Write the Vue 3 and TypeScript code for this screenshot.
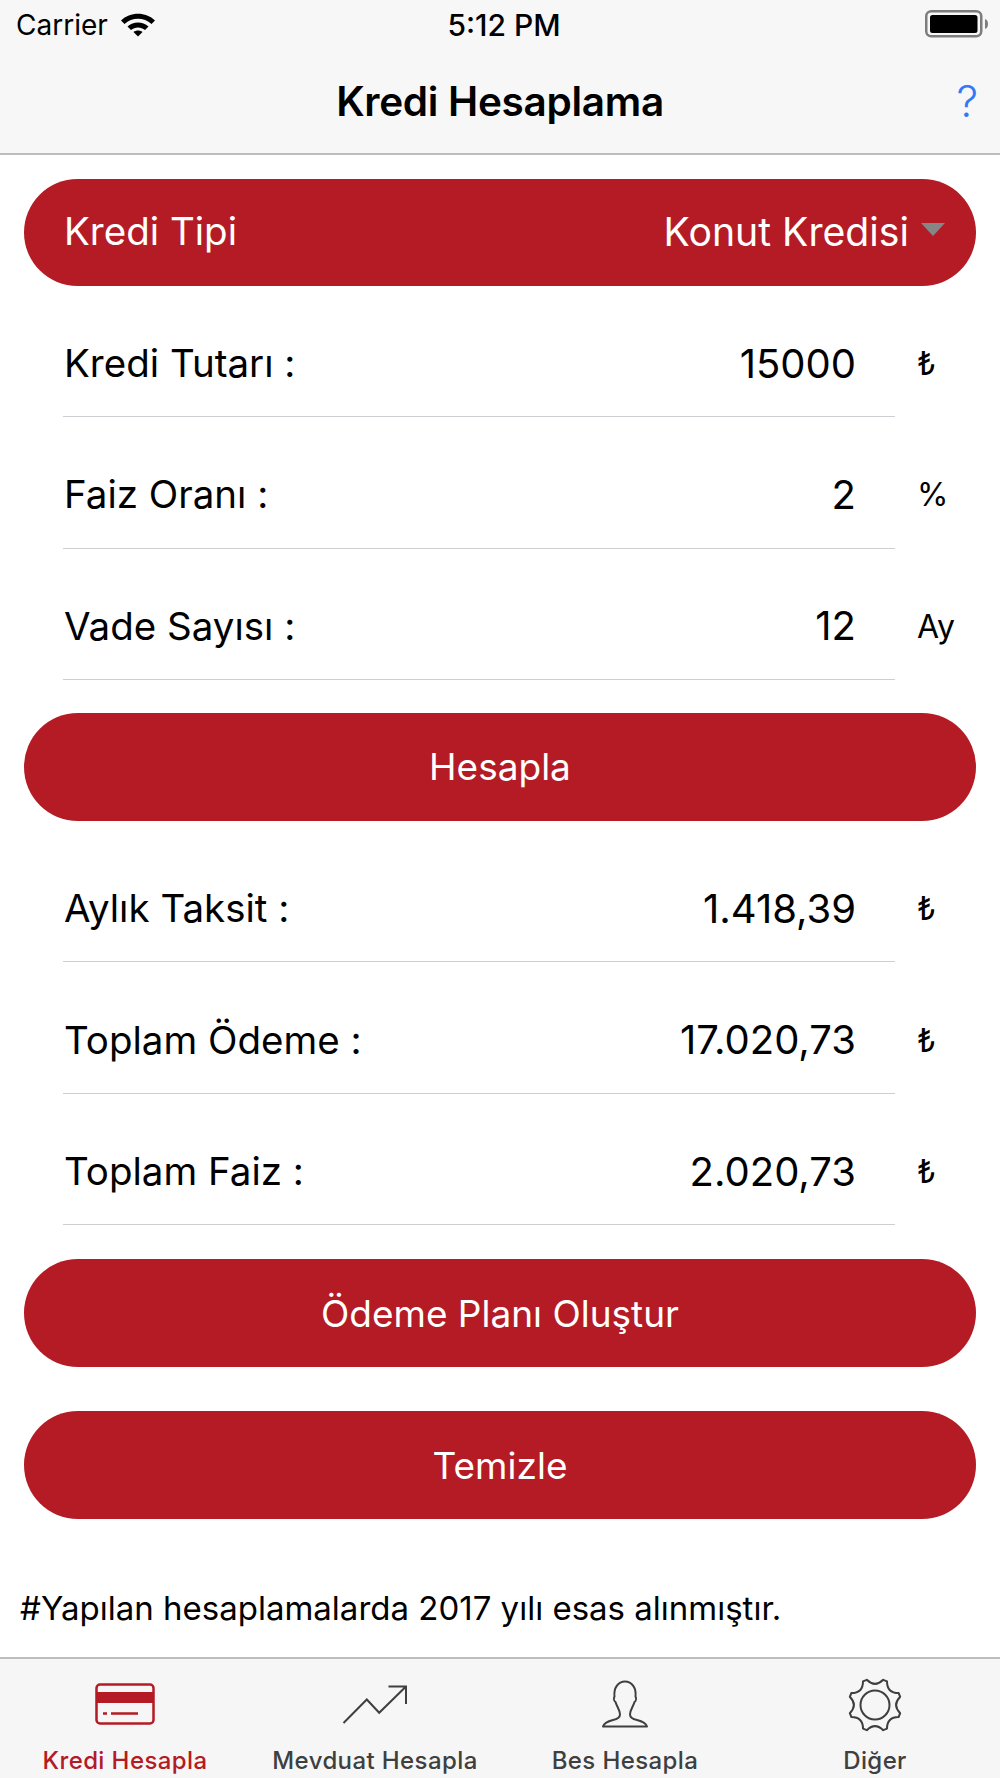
<template>
  <div class="screen">
    <header class="top">
      <div class="status">
        <div class="status-left">
          <span>Carrier</span>
          <svg class="wifi" width="36" height="26" viewBox="0 0 36 26">
            <path d="M1 9.5 C10 0.5 26 0.5 35 9.5 L31.5 13 C24 6 12 6 4.5 13 Z" fill="#000" />
            <path d="M7.5 15.5 C13.5 10 22.5 10 28.5 15.5 L25 19 C21 15.5 15 15.5 11 19 Z" fill="#000" />
            <path d="M13.5 21 C16 19 20 19 22.5 21 L18 25.5 Z" fill="#000" />
          </svg>
        </div>
        <span class="clock">5:12 PM</span>
        <svg class="battery" width="64" height="30" viewBox="0 0 64 30">
          <rect x="1.25" y="1.25" width="55" height="25" rx="5" fill="none" stroke="#7d7d7d" stroke-width="2.5" />
          <rect x="5" y="5" width="47.5" height="18" rx="2.5" fill="#000" />
          <path d="M60 9 C62 9.5 63 11.5 63 14 C63 16.5 62 18.5 60 19 Z" fill="#7d7d7d" />
        </svg>
      </div>
      <div class="nav">
        <span class="nav-title">Kredi Hesaplama</span>
        <span class="nav-help">?</span>
      </div>
    </header>

    <main class="content">
      <div class="pill pill-select">
        <span>Kredi Tipi</span>
        <span class="select-value">Konut Kredisi<i class="caret" /></span>
      </div>

      <div class="rows">
        <div class="row" v-for="r in inputs" :key="r.label">
          <div class="row-main">
            <span>{{ r.label }}</span>
            <span class="value">{{ r.value }}</span>
          </div>
          <span class="unit">{{ r.unit }}</span>
        </div>
      </div>

      <div class="pill">Hesapla</div>

      <div class="rows rows-result">
        <div class="row" v-for="r in results" :key="r.label">
          <div class="row-main">
            <span>{{ r.label }}</span>
            <span class="value">{{ r.value }}</span>
          </div>
          <span class="unit">{{ r.unit }}</span>
        </div>
      </div>

      <div class="pill">Ödeme Planı Oluştur</div>
      <div class="pill pill-last">Temizle</div>

      <p class="note">#Yapılan hesaplamalarda 2017 yılı esas alınmıştır.</p>
    </main>

    <nav class="tabs">
      <div class="tab active">
        <svg class="ic-card" width="60" height="42" viewBox="0 0 60 42">
          <rect x="1.5" y="1.5" width="57" height="39" rx="3.5" fill="none" stroke="#b41b25" stroke-width="2.5" />
          <rect x="1.5" y="9" width="57" height="11" fill="#b41b25" />
          <path d="M8 30.5 H12 M16 30.5 H43" stroke="#b41b25" stroke-width="2.5" />
        </svg>
        <span>Kredi Hesapla</span>
      </div>
      <div class="tab">
        <svg class="ic-trend" width="66" height="42" viewBox="0 0 66 42">
          <path d="M1.5 39 L24.8 15.5 L37.2 28.8 L64 2.5 M46.5 2.5 H64 V20" fill="none" stroke="#3f3f3f" stroke-width="2" />
        </svg>
        <span>Mevduat Hesapla</span>
      </div>
      <div class="tab">
        <svg class="ic-user" width="48" height="48" viewBox="0 0 48 48">
          <path d="M2 46.5 H46 C45 43 42 41.5 36 40 C31.5 39 29 37.5 29 34.5 C29 30 32 27 33.5 22 C35 21 35.5 18.5 34.5 16.5 C35.5 8 31 1.5 24 1.5 C17 1.5 12.5 8 13.5 16.5 C12.5 18.5 13 21 14.5 22 C16 27 19 30 19 34.5 C19 37.5 16.5 39 12 40 C6 41.5 3 43 2 46.5 Z" fill="none" stroke="#3f3f3f" stroke-width="2" stroke-linejoin="round" />
        </svg>
        <span>Bes Hesapla</span>
      </div>
      <div class="tab">
        <svg class="ic-gear" width="56" height="56" viewBox="0 0 56 56">
          <circle cx="28" cy="28" r="14.5" fill="none" stroke="#3f3f3f" stroke-width="2" />
          <path :d="gearPath" fill="none" stroke="#3f3f3f" stroke-width="2" stroke-linejoin="round" />
        </svg>
        <span>Diğer</span>
      </div>
    </nav>
  </div>
</template>

<script setup lang="ts">
interface Row {
  label: string
  value: string
  unit: string
}

const inputs: Row[] = [
  { label: 'Kredi Tutarı :', value: '15000', unit: '₺' },
  { label: 'Faiz Oranı :', value: '2', unit: '%' },
  { label: 'Vade Sayısı :', value: '12', unit: 'Ay' },
]

const results: Row[] = [
  { label: 'Aylık Taksit :', value: '1.418,39', unit: '₺' },
  { label: 'Toplam Ödeme :', value: '17.020,73', unit: '₺' },
  { label: 'Toplam Faiz :', value: '2.020,73', unit: '₺' },
]

// eight teeth, scalloped between them, none on the vertical axis
function buildGear(): string {
  const teeth = 8
  const step = (2 * Math.PI) / teeth
  const pt = (r: number, t: number) =>
    `${(28 + r * Math.cos(t)).toFixed(1)} ${(28 + r * Math.sin(t)).toFixed(1)}`
  let d = ''
  for (let i = 0; i < teeth; i++) {
    const a = i * step - Math.PI / 2 + step / 2
    d += `${i === 0 ? 'M' : 'L'}${pt(26.5, a - step * 0.1)} L${pt(26.5, a + step * 0.1)} Q${pt(17, a + step * 0.5)} ${pt(26.5, a + step * 0.9)} `
  }
  return d + 'Z'
}

const gearPath = buildGear()
</script>

<style>
html,
body {
  margin: 0;
  background: #fff;
}
</style>

<style scoped>
.screen {
  width: 1000px;
  height: 1778px;
  display: flex;
  flex-direction: column;
  font-family: Inter, "Liberation Sans", sans-serif;
  color: #000;
  overflow: hidden;
}
.top {
  background: #f7f7f7;
  border-bottom: 2px solid #bdbdbd;
  height: 153px;
  flex: none;
}
.status {
  height: 50px;
  padding: 0 11px 0 16px;
  display: flex;
  align-items: center;
  justify-content: space-between;
  font-size: 28px;
  position: relative;
}
.status-left {
  display: flex;
  align-items: center;
  gap: 12px;
}
.wifi {
  margin-top: -2px;
}
.clock {
  position: absolute;
  left: 0;
  right: 0;
  text-align: center;
  font-weight: 500;
  font-size: 30px;
  padding-left: 8px;
}
.nav {
  height: 103px;
  display: flex;
  align-items: center;
  justify-content: center;
  position: relative;
}
.nav-title {
  font-size: 40.5px;
  font-weight: 600;
  letter-spacing: -0.3px;
}
.nav-help {
  position: absolute;
  right: 22px;
  top: 25px;
  color: #3478f6;
  font-size: 43px;
  font-weight: 300;
}
.content {
  flex: 1;
  padding: 24px 24px 0;
  display: flex;
  flex-direction: column;
}
.pill {
  height: 108px;
  flex: none;
  border-radius: 54px;
  background: #b41b25;
  color: #fff;
  font-size: 37px;
  display: flex;
  align-items: center;
  justify-content: center;
}
.pill-select {
  height: 107px;
  justify-content: space-between;
  padding: 0 31px 0 40px;
  font-size: 38.5px;
}
.pill-select > span {
  padding-bottom: 3px;
}
.pill-select .select-value {
  font-size: 39.2px;
}
.select-value {
  display: flex;
  align-items: center;
}
.caret {
  width: 0;
  height: 0;
  margin: -3px 0 0 12px;
  border-left: 12px solid transparent;
  border-right: 12px solid transparent;
  border-top: 13px solid #868686;
}
.pill-last {
  margin-top: 44px;
}
.rows {
  padding-bottom: 33px;
}
.rows-result {
  padding-top: 10px;
  padding-bottom: 34px;
}
.row {
  display: flex;
  align-items: stretch;
  height: 131.34px;
  font-size: 38.5px;
}
.rows-result .row {
  height: 131.5px;
}
.row-main {
  width: 832px;
  margin-left: 39px;
  padding: 24px 39px 0 1px;
  box-sizing: border-box;
  display: flex;
  align-items: center;
  justify-content: space-between;
  border-bottom: 1px solid #cfcfd3;
}
.value {
  font-size: 40px;
}
.unit {
  margin-left: 22px;
  font-size: 32px;
  display: flex;
  align-items: center;
  padding-top: 24px;
}
.note {
  margin: 69px 0 0 -4px;
  font-size: 33px;
  line-height: 40px;
}
.tabs {
  height: 119px;
  flex: none;
  background: #f6f6f6;
  border-top: 2px solid #bdbdbd;
  display: grid;
  grid-template-columns: repeat(4, 1fr);
}
.tab {
  display: flex;
  flex-direction: column;
  align-items: center;
  justify-content: flex-end;
  color: #3f3f3f;
  font-size: 24px;
  font-weight: 500;
  padding-bottom: 2px;
}
.tab span {
  line-height: 30px;
  letter-spacing: 0.4px;
}
.ic-card {
  margin-bottom: 21px;
}
.ic-trend {
  margin-bottom: 20px;
}
.ic-user {
  margin-bottom: 18px;
}
.ic-gear {
  margin-bottom: 13px;
}
.tab.active {
  color: #b41b25;
}
</style>
